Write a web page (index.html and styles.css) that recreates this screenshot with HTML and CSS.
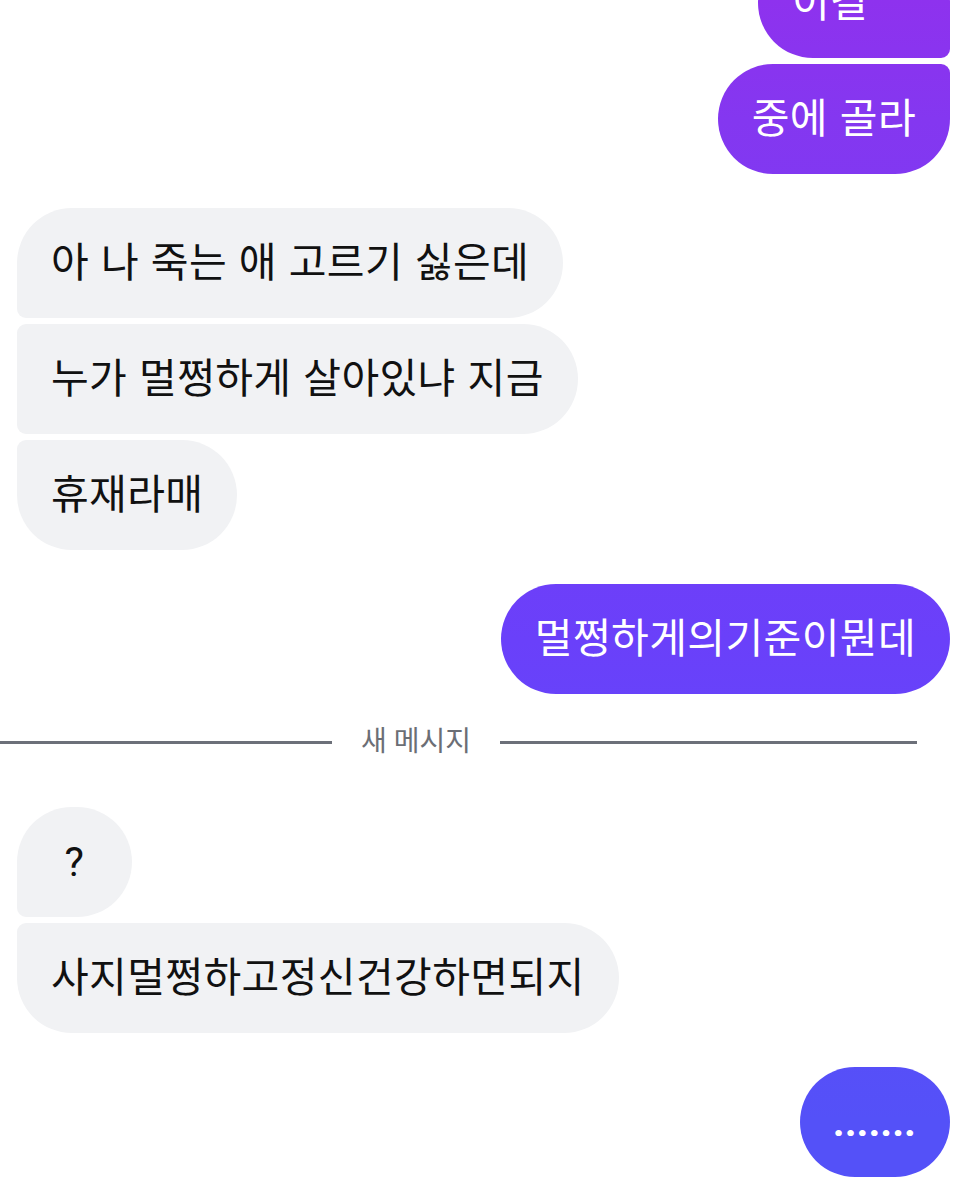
FILE: index.html
```html
<!DOCTYPE html>
<html lang="ko">
<head>
  <meta charset="UTF-8">
  <title>메시지</title>
  <link rel="stylesheet" href="styles.css">
</head>
<body>
  <div class="thread">
    <!-- my messages (top one is scrolled half out) -->
    <div class="group mine">
      <div class="bubble first cut">이걸</div>
      <div class="bubble last">중에 골라</div>
    </div>

    <!-- their messages -->
    <div class="group theirs">
      <div class="bubble first">아 나 죽는 애 고르기 싫은데</div>
      <div class="bubble mid">누가 멀쩡하게 살아있냐 지금</div>
      <div class="bubble last">휴재라매</div>
    </div>

    <div class="group mine">
      <div class="bubble">멀쩡하게의기준이뭔데</div>
    </div>

    <!-- new messages divider -->
    <div class="divider">
      <span class="line short"></span>
      <span class="label">새 메시지</span>
      <span class="line"></span>
    </div>

    <div class="group theirs">
      <div class="bubble first single-char">?</div>
      <div class="bubble last">사지멀쩡하고정신건강하면되지</div>
    </div>

    <div class="group mine">
      <div class="bubble dots">.......</div>
    </div>
  </div>
</body>
</html>
```

FILE: styles.css
```css
body {
  margin: 0;
  background: #fff;
  font-family: Roboto, "Noto Sans CJK KR", sans-serif;
  overflow: hidden;
}
.thread {
  display: flex;
  flex-direction: column;
  gap: 34px;
  padding: 0 23px 0 17px;
  margin-top: -52px;
}
.group {
  display: flex;
  flex-direction: column;
  gap: 6px;
}
.group.mine {
  align-items: flex-end;
}
.group.theirs {
  align-items: flex-start;
}
.bubble {
  font-size: 41px;
  line-height: 48px;
  letter-spacing: 0.4px;
  word-spacing: 1.2px;
  padding: 31px 34px;
  border-radius: 55px;
  white-space: nowrap;
}
.theirs .bubble {
  background: #f1f2f4;
  color: #111;
}
.mine .bubble {
  color: #fff;
  background: linear-gradient(180deg, #8e32ee 0px, #8437f0 120px, #6a40fa 640px, #5451f8 1120px);
  background-attachment: fixed;
}
/* grouped corners */
.theirs .first { border-bottom-left-radius: 9px; }
.theirs .mid { border-top-left-radius: 9px; border-bottom-left-radius: 9px; }
.theirs .last { border-top-left-radius: 9px; }
.mine .first { border-bottom-right-radius: 9px; }
.mine .last { border-top-right-radius: 9px; }

.cut {
  width: 124px;
}
.single-char {
  min-width: 47px;
  text-align: center;
}
.dots {
  font-weight: 700;
  letter-spacing: 0;
  padding: 31px 34px 31px 33px;
}

.divider {
  display: flex;
  align-items: center;
  gap: 29px;
  padding-right: 56px;
  margin: -1px -23px 16px -17px;
}
.divider .line {
  flex: 1;
  height: 3px;
  background: #6c7079;
}
.divider .line.short {
  flex: 0 0 332px;
}
.divider .label {
  font-size: 28px;
  line-height: 30px;
  color: #6b6e75;
}
```
